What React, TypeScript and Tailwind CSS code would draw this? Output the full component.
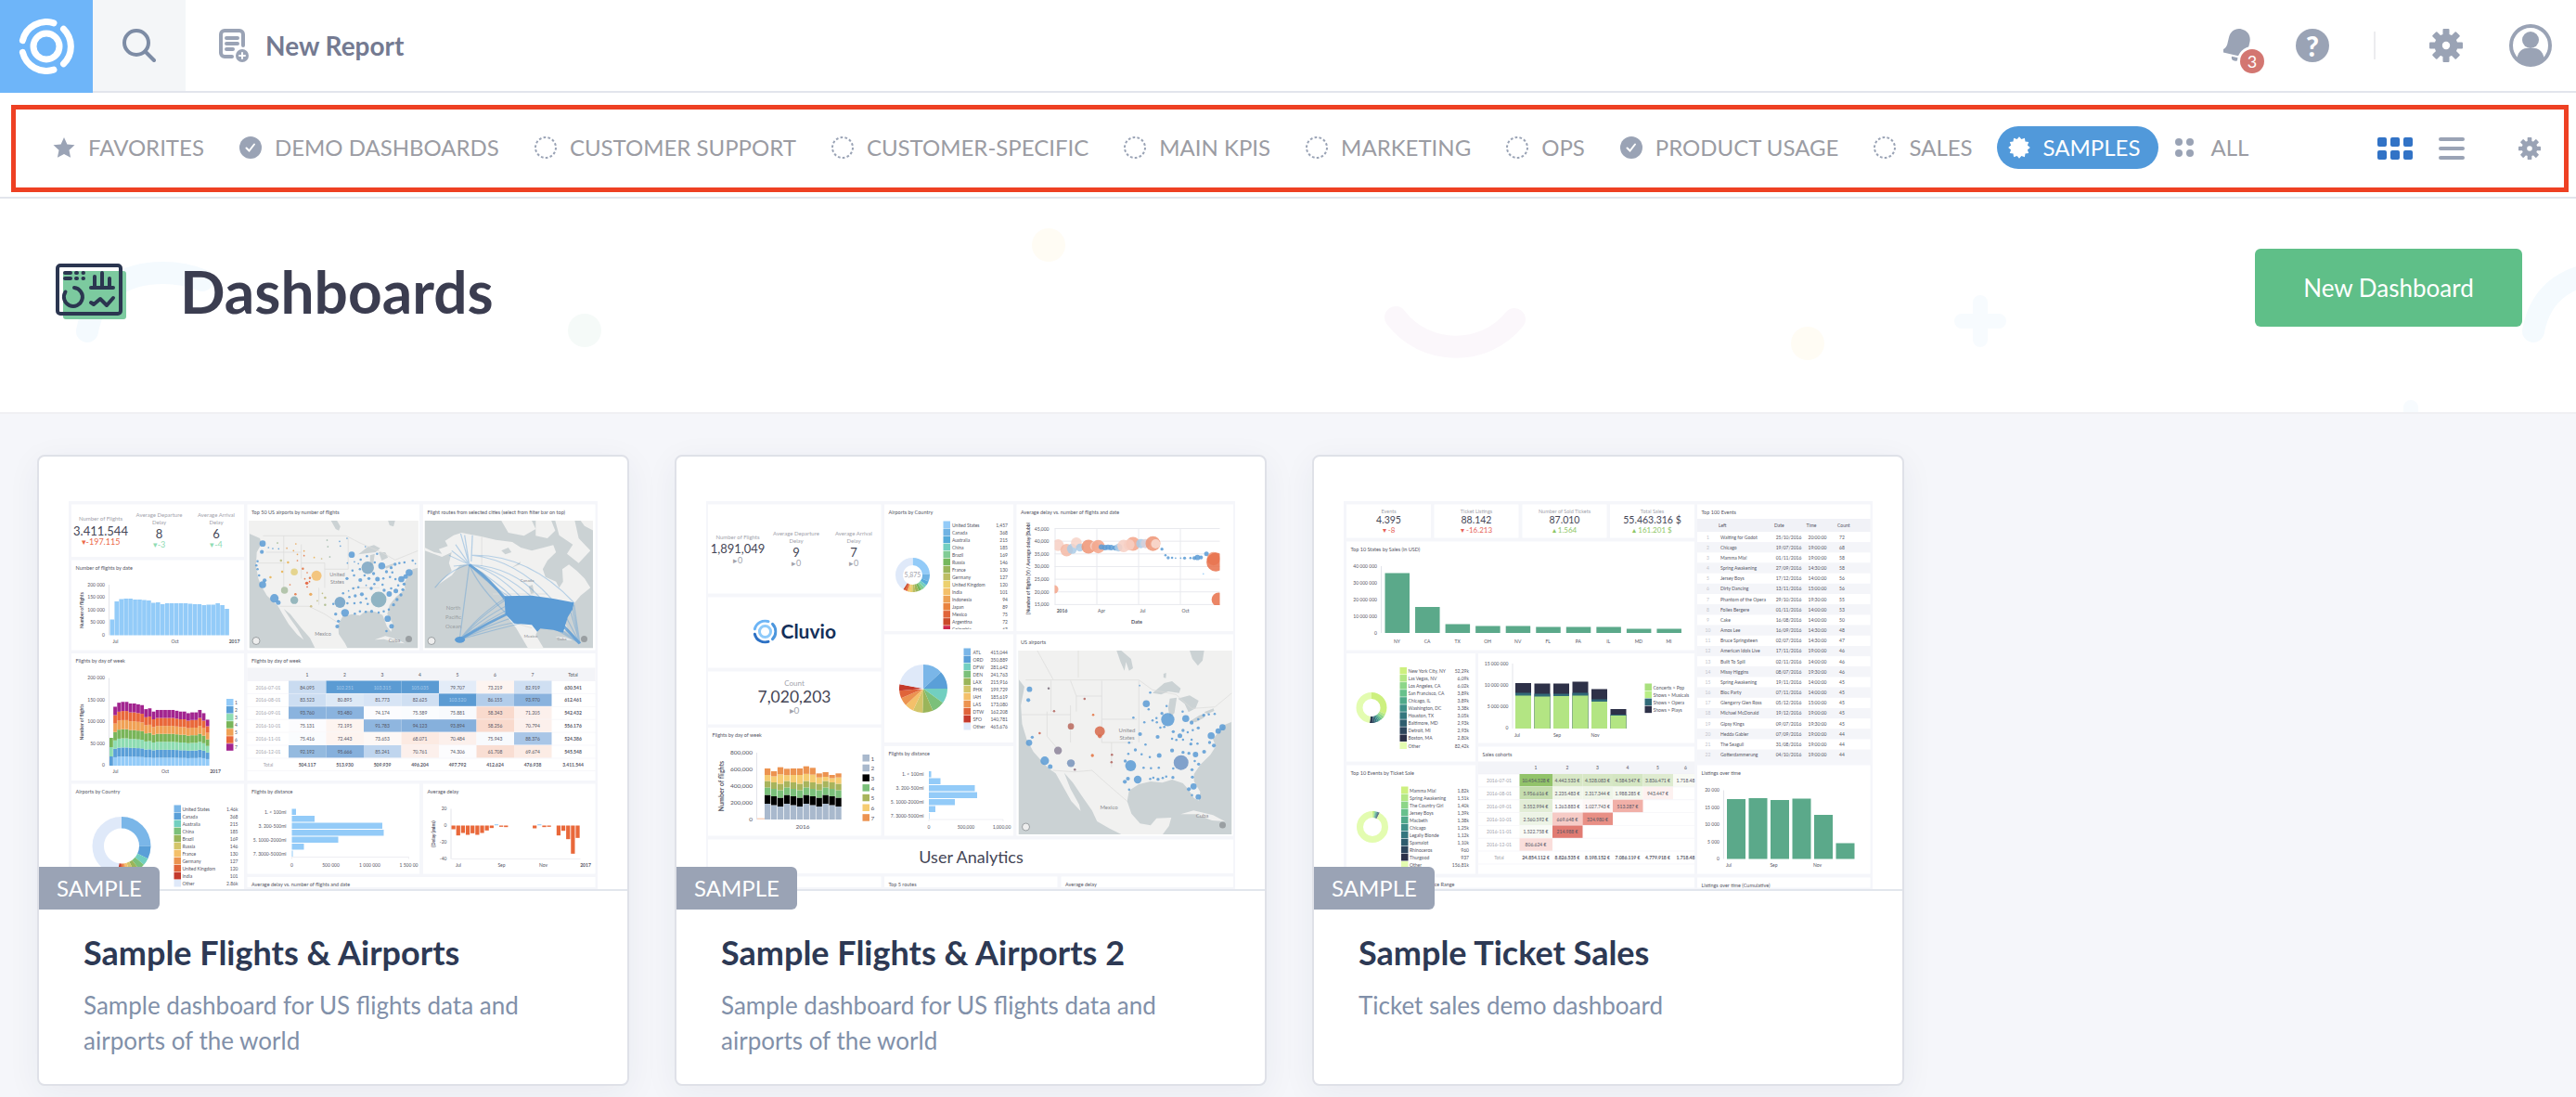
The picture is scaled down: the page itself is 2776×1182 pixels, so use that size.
import React from 'react';

type Dot = [number, number, number, string?];

const INK = '#545564';
const GREY = '#a2a3ac';

/* ---------- Icons ---------- */

const LogoMark = ({ className = '' }: { className?: string }) => (
  <svg viewBox="0 0 60 60" className={className} fill="none" stroke="#fff" strokeWidth="7" strokeLinecap="round" aria-hidden="true">
    <circle cx="30" cy="30" r="14" />
    <path d="M4.400 23.600A26.400 26.400 0 0 1 38 4.800" />
    <path d="M48.500 11.200A26.400 26.400 0 0 1 48.500 48.800" />
    <path d="M4.400 36.400A26.400 26.400 0 0 0 38 55.200" />
  </svg>
);

const SearchIcon = () => (
  <svg viewBox="0 0 36 36" className="h-9 w-9" fill="none" stroke="#7d8ca5" strokeWidth="4" strokeLinecap="round" aria-hidden="true">
    <circle cx="15" cy="15" r="13" />
    <path d="M24.500 24.500L34 34" />
  </svg>
);

const ReportIcon = () => (
  <svg viewBox="0 0 32 36" className="h-9 w-8" fill="none" stroke="#9aa3b5" strokeWidth="4" strokeLinecap="round" aria-hidden="true">
    <path d="M26 18V6a4 4 0 0 0-4-4H6a4 4 0 0 0-4 4v20a4 4 0 0 0 4 4h8" />
    <path d="M8 10h12M8 16h12M8 22h7" />
    <circle cx="25" cy="29" r="7" fill="#9aa3b5" stroke="none" />
    <path d="M25 26v6M22 29h6" stroke="#fff" strokeWidth="2" />
  </svg>
);

const BellIcon = () => (
  <svg viewBox="0 0 36 36" className="h-9 w-9" aria-hidden="true">
    <g transform="rotate(13 16 17)" fill="#9aa3b5">
      <path d="M16 0c-7 0-11.500 5-11.500 12v7c0 3-1 5-3.500 7v3h30v-3c-2.500-2-3.500-4-3.500-7v-7C27.500 5 23 0 16 0z" />
      <path d="M12 31h8a4 4 0 0 1-8 0z" />
    </g>
    <circle cx="31" cy="35" r="16" fill="#fff" />
  </svg>
);

const GearIcon = ({ className }: { className: string }) => (
  <svg viewBox="0 0 36 36" className={className} aria-hidden="true">
    <g fill="#9aa3b5">
      <circle cx="18" cy="18" r="12.500" />
      {[0, 45, 90, 135].map((a) => (
        <rect key={a} x="14.500" y="0" width="7" height="36" rx="1" transform={`rotate(${a} 18 18)`} />
      ))}
    </g>
    <circle cx="18" cy="18" r="4.200" fill="#fff" />
  </svg>
);

const AvatarIcon = () => (
  <svg viewBox="0 0 46 46" className="h-[46px] w-[46px]" aria-hidden="true">
    <circle cx="23" cy="23" r="21" fill="#fff" stroke="#9aa3b5" strokeWidth="4" />
    <circle cx="23" cy="17" r="9" fill="#9aa3b5" />
    <path d="M8.500 38c0-7 5-12 10-12h9c5 0 10 5 10 12-4 4-9 6-14.500 6s-10.500-2-14.500-6z" fill="#9aa3b5" />
  </svg>
);

const StarIcon = () => (
  <svg viewBox="0 0 24 24" className="h-6 w-6" fill="#9aa3b5" aria-hidden="true">
    <path d="M12 1l3.400 7.400 8.100.9-6 5.500 1.600 8L12 18.900l-7.100 3.900 1.600-8-6-5.500 8.100-.9z" />
  </svg>
);

const CheckIcon = () => (
  <svg viewBox="0 0 24 24" className="h-6 w-6" aria-hidden="true">
    <circle cx="12" cy="12" r="12" fill="#9aa3b5" />
    <path d="M7.500 12.500l3 3 5.500-7" fill="none" stroke="#fff" strokeWidth="2" strokeLinecap="round" />
  </svg>
);

const DashedIcon = () => (
  <svg viewBox="0 0 24 24" className="h-6 w-6" aria-hidden="true">
    <circle cx="12" cy="12" r="11" fill="none" stroke="#9aa3b5" strokeWidth="2" pathLength={140} strokeDasharray="5.500 4.500" />
  </svg>
);

const burst = Array.from({ length: 24 }, (_, i) => {
  const r = i % 2 ? 9.2 : 11.8;
  const a = (i * Math.PI) / 12 - Math.PI / 2;
  return `${12 + r * Math.cos(a)},${12 + r * Math.sin(a)}`;
}).join(' ');

const BurstIcon = () => (
  <svg viewBox="0 0 24 24" className="h-6 w-6" fill="#fff" aria-hidden="true">
    <polygon points={burst} />
  </svg>
);

const DotsIcon = () => (
  <svg viewBox="0 0 24 24" className="h-6 w-6" fill="#9aa3b5" aria-hidden="true">
    <circle cx="4" cy="6" r="4" />
    <circle cx="16" cy="6" r="4" />
    <circle cx="4" cy="18" r="4" />
    <circle cx="16" cy="18" r="4" />
  </svg>
);

const GridIcon = () => (
  <svg viewBox="0 0 38 24" className="h-6 w-[38px]" fill="#3273c6" aria-hidden="true">
    {[0, 14, 28].map((x) => (
      <g key={x}>
        <rect x={x} y="0" width="10" height="10" rx="2" />
        <rect x={x} y="14" width="10" height="10" rx="2" />
      </g>
    ))}
  </svg>
);

const ListIcon = () => (
  <svg viewBox="0 0 28 24" className="h-6 w-7" fill="#9aa3b5" aria-hidden="true">
    {[0, 10, 20].map((y) => (
      <rect key={y} x="0" y={y} width="28" height="4" rx="2" />
    ))}
  </svg>
);

const DashboardsIcon = () => (
  <svg viewBox="0 0 76 60" className="h-[60px] w-[76px]" fill="none" stroke="#2b3650" strokeWidth="4" strokeLinecap="round" strokeLinejoin="round" aria-hidden="true">
    <rect x="2" y="2" width="68" height="52" rx="3" fill="#fff" stroke="none" />
    <rect x="8" y="8" width="68" height="52" rx="3" fill="#7cca9f" stroke="none" />
    <rect x="2" y="2" width="68" height="52" rx="3" />
    <path d="M10 10h6M22 10h1M29.500 10h.5M10 16h6M22 16h1M29.500 16h.5" />
    <path d="M38 26h24M42 25V14M50 25V10M58 25V16" />
    <path d="M20 26a10 10 0 1 1-9.500 4.500" />
    <path d="M38 42l3 2 7-6 7 7 7-8" />
  </svg>
);

/* ---------- Chart pieces used in the previews ---------- */

type LabelProps = { x: number; y: number; s?: number; a?: 'start' | 'middle' | 'end'; c?: string; b?: boolean; r?: boolean; children: React.ReactNode };

const Label = ({ x, y, s = 10, a = 'start', c = INK, b, r, children }: LabelProps) => (
  <text x={x} y={y} fontSize={s} textAnchor={a} fill={c} fontWeight={b ? 700 : 400} transform={r ? `rotate(-90 ${x} ${y})` : undefined}>
    {children}
  </text>
);

const Panel = ({ x, y, w, h, title }: { x: number; y: number; w: number; h: number; title?: string }) => (
  <>
    <rect x={x} y={y} width={w} height={h} fill="#fff" />
    {title && <Label x={x + 9} y={y + 20} s={11}>{title}</Label>}
  </>
);

const Legend = ({ x, y, tx, vx, rows, colors }: { x: number; y: number; tx: number; vx?: number; rows: string[][]; colors: string[] }) => (
  <>
    {rows.map(([name, value], i) => (
      <g key={i}>
        <rect x={x} y={y + i * 16.1} width="15" height="15" fill={colors[i]} />
        <Label x={tx} y={y + i * 16.1 + 12}>{name}</Label>
        {value && vx && <Label x={vx} y={y + i * 16.1 + 12} a="end">{value}</Label>}
      </g>
    ))}
  </>
);

const Ring = ({ x, y, outer, inner, parts, colors }: { x: number; y: number; outer: number; inner: number; parts: number[]; colors: string[] }) => {
  let start = 0;
  return (
    <g transform={`rotate(-90 ${x} ${y})`}>
      {parts.map((p, i) => {
        const offset = -start;
        start += p;
        return (
          <circle key={i} cx={x} cy={y} r={(outer + inner) / 2} fill="none" stroke={colors[i]} strokeWidth={outer - inner} pathLength={100} strokeDasharray={`${p} ${100 - p}`} strokeDashoffset={offset} />
        );
      })}
    </g>
  );
};

// Axis labels, evenly stepped from the first position to the last
const Ticks = ({ x, y, step, labels, s = 10 }: { x: number; y: number; step: number; labels: string[]; s?: number }) => (
  <>
    {labels.map((l, i) => (
      <Label key={i} x={x} y={y + i * step + 3} a="end" s={s}>{l}</Label>
    ))}
    <path d={`M${x + 9} ${y}v${step * (labels.length - 1)}`} stroke="#e3e4ea" strokeWidth="2" />
  </>
);

const XLabels = ({ y, items }: { y: number; items: [number, string, boolean?][] }) => (
  <>
    {items.map(([x, l, bold]) => (
      <Label key={x} x={x} y={y} a="middle" b={bold}>{l}</Label>
    ))}
  </>
);

const Kpi = ({ x, lines, y, value, vy, delta, dy, c }: { x: number; lines: string[]; y: number; value: string; vy: number; delta: string; dy: number; c: string }) => (
  <>
    {lines.map((l, i) => (
      <Label key={l} x={x} y={y + i * 15} s={12} a="middle" c={GREY}>{l}</Label>
    ))}
    <Label x={x} y={vy} s={26} a="middle" c="#454656">{value}</Label>
    <Label x={x} y={dy} s={18} a="middle" c={c}>{delta}</Label>
  </>
);

const Dots = ({ dots, ox, oy, fill = '#5b9bd5' }: { dots: Dot[]; ox: number; oy: number; fill?: string }) => (
  <g fillOpacity="0.850">
    {dots.map(([x, y, r, c], i) => (
      <circle key={i} cx={x * 0.842 + ox} cy={(y * 2) / 3 + oy} r={r * 0.84} fill={c || fill} />
    ))}
  </g>
);

const COUNTRY = ['#7ab6e8', '#5a9fd8', '#72cfc0', '#7bc07a', '#9ab55a', '#d3c569', '#f4c06a', '#ec9350', '#e0643a', '#c43a2c', '#dfe9f9'];
const WEEK = ['#93cbf8', '#5a9fd8', '#8edcb2', '#79b559', '#f0a155', '#e9683a', '#a2248f'];
const GREENS = ['#cdf07f', '#b3e785', '#8dd688', '#68c18c', '#50a98a', '#3f8f88', '#34767e', '#2f5d6e', '#2d455c', '#2b3048', '#e3fcb0'];

/* ---------- Preview: Sample Flights & Airports ---------- */

const byDate = [34, 73, 78, 79, 79, 77, 77, 76, 75, 70, 71, 67, 69, 69, 69, 69, 69, 68, 67, 67, 65, 66, 66, 69, 65, 57];
const delays = [12, 32, 24, 30, 25, 30, 24, 16, 8, -4, 4, 5, 0, 0, 0, 0, 0, 9, -4, 5, 4, 0, 32, 17, 44, 91, 40];

const heat: [string, string[], string[]][] = [
  ['2016-07-01', ['84.095', '102.251', '103.315', '105.035', '79.707', '73.219', '82.919', '630.541'], ['#c9dbf0', '#5b9bd3', '#5b9bd3', '#5b9bd3', '#e3ecf8', '#fdf4f0', '#cfdff2']],
  ['2016-08-01', ['83.523', '80.895', '81.773', '82.625', '103.520', '86.155', '93.970', '612.461'], ['#cddef2', '#dde9f6', '#d7e4f5', '#cfdff2', '#5b9bd3', '#b3cdea', '#8ab3de']],
  ['2016-09-01', ['93.760', '93.480', '74.174', '75.589', '75.881', '58.343', '71.205', '542.432'], ['#8ab3de', '#8ab3de', '#fcfcfe', '#fafcfe', '#f8fafd', '#f9dacd', '#fcf0ec']],
  ['2016-10-01', ['75.131', '72.195', '91.783', '94.123', '93.894', '58.256', '70.794', '556.176'], ['#fcfcfe', '#fdf4f0', '#8fb6df', '#86b0dc', '#86b0dc', '#f9dacd', '#fcf0ec']],
  ['2016-11-01', ['75.416', '72.443', '73.653', '68.071', '70.484', '75.943', '88.376', '524.386'], ['#fafcfe', '#fdf4f0', '#fdf8f6', '#fceae2', '#fcf0ec', '#f8fafd', '#a9c6e7']],
  ['2016-12-01', ['92.192', '95.666', '85.241', '70.761', '74.306', '61.708', '69.674', '545.548'], ['#94badf', '#86b0dc', '#bfd5ee', '#fcf0ec', '#fcfcfe', '#f9ded3', '#fcece5']],
];
const heatTotals = ['504.117', '513.930', '509.939', '496.204', '497.792', '412.624', '476.938', '3.411.544'];

const usDots: Dot[] = [
  [601, 317, 8], [599, 344, 5], [601, 450, 9], [631, 494, 11], [641, 508, 6], [606, 436, 5], [588, 374, 3], [682, 409, 9, '#e3cf7c'], [739, 421, 13, '#f3bd6b'],
  [657, 468, 9, '#a9bda0'], [682, 500, 10, '#86adb4'], [870, 395, 16, '#7aa5c2'], [906, 389, 9], [829, 353, 8], [976, 411, 9], [956, 432, 8], [967, 424, 6],
  [898, 498, 20, '#7fa9bb'], [799, 507, 14, '#6c9fc5'], [812, 541, 10], [921, 560, 8], [931, 584, 6], [925, 480, 7], [942, 470, 6], [895, 432, 6], [851, 435, 5], [855, 481, 5],
  [616, 330, 2], [627, 333, 2], [639, 315, 2, '#8fae7c'], [642, 334, 2], [663, 332, 2, '#e3a15a'], [686, 318, 2, '#e9a04b'], [680, 340, 2, '#e9a04b'], [690, 352, 2, '#e9a04b'],
  [707, 341, 2, '#e9a04b'], [648, 372, 3, '#b9b878'], [666, 378, 3, '#e9b04b'], [690, 372, 2, '#e3703c'], [707, 356, 2, '#e3703c'], [733, 362, 2, '#e9b04b'], [752, 366, 2, '#c9b878'],
  [773, 360, 2, '#8fae9c'], [766, 306, 2, '#8fae9c'], [768, 327, 2, '#8fae9c'], [798, 310, 2], [800, 325, 2], [817, 300, 2], [651, 408, 3, '#e9b04b'], [621, 426, 3, '#e9b04b'], [704, 398, 3, '#e3703c'],
  [715, 411, 2, '#e3703c'], [722, 428, 3, '#e3703c'], [709, 431, 2, '#e3703c'], [714, 445, 4, '#e3542c'], [721, 440, 2, '#e3542c'], [715, 457, 2, '#e3542c'], [671, 450, 2, '#e3703c'], [685, 481, 3, '#e3703c'],
  [724, 481, 4, '#e9a04b'], [754, 478, 2, '#b9b878'], [761, 492, 3, '#b9b878'], [741, 502, 2, '#b9b878'], [725, 520, 3, '#c9b878'], [761, 515, 3, '#a9b888'], [585, 388, 3], [588, 400, 3], [592, 420, 3],
  [818, 380, 2], [836, 376, 2], [852, 369, 3], [868, 358, 3], [864, 327, 2], [846, 382, 2], [850, 400, 3], [831, 404, 3], [835, 420, 3], [817, 430, 4], [862, 420, 3], [873, 430, 4], [885, 414, 4], [894, 350, 3],
  [888, 378, 3], [918, 408, 4], [930, 395, 4], [940, 384, 4], [951, 380, 3], [964, 378, 3], [933, 410, 3], [927, 425, 3], [941, 432, 3], [910, 430, 3], [908, 450, 3], [887, 448, 3], [866, 452, 2], [879, 462, 4], [846, 458, 3],
  [833, 462, 3], [821, 470, 2], [807, 478, 3], [838, 486, 4], [823, 490, 3], [818, 510, 3], [836, 510, 3], [852, 508, 3], [870, 512, 3], [866, 495, 3], [850, 536, 3], [865, 538, 3], [880, 536, 4], [837, 544, 3], [898, 540, 3],
  [911, 536, 3], [924, 530, 3], [936, 515, 4], [945, 498, 4], [955, 483, 4], [960, 466, 4], [948, 452, 3], [963, 448, 4], [930, 462, 3], [912, 468, 4], [788, 545, 4], [795, 568, 4], [792, 585, 5], [782, 512, 3], [918, 600, 3], [985, 372, 3], [992, 382, 2],
];

const FlightsPreview = () => (
  <svg viewBox="0 0 1140 836" className="block w-full" role="img" aria-label="Sample Flights & Airports">
    <defs>
      <clipPath id="fa-m1"><rect x="389" y="42" width="364" height="275" /></clipPath>
      <clipPath id="fa-m2"><rect x="767" y="42" width="363" height="275" /></clipPath>
    </defs>
    <rect width="1140" height="836" fill="#f5f6fa" />
    <Panel x={6} y={7} w={372} h={113} />
    <Kpi x={69} lines={['Number of Flights']} y={42} value="3.411.544" vy={73} delta="▾-197.115" dy={94} c="#ec6a4a" />
    <Kpi x={195} lines={['Average Departure', 'Delay']} y={34} value="8" vy={79} delta="▾-3" dy={100} c="#8fdcb4" />
    <Kpi x={318} lines={['Average Arrival', 'Delay']} y={34} value="6" vy={79} delta="▾-4" dy={100} c="#8fdcb4" />

    <Panel x={6} y={127} w={372} h={194} title="Number of flights by date" />
    <Ticks x={78} y={180} step={27.2} labels={['200 000', '150 000', '100 000', '50 000', '0']} />
    {byDate.map((h, i) => (
      <rect key={i} x={89 + i * 9.9} y={289 - h} width="9.200" height={h} fill="#93cbf8" />
    ))}
    <Label x={32} y={235} a="middle" b r>Number of flights</Label>
    <XLabels y={305} items={[[101, 'Jul'], [229, 'Oct'], [357, '2017', true]]} />

    <Panel x={6} y={328} w={372} h={274} title="Flights by day of week" />
    <Ticks x={78} y={381} step={47.2} labels={['200 000', '150 000', '100 000', '50 000', '0']} />
    {byDate.map((h, i) => {
      const unit = (h * 1.74) / 7;
      const keep = i === 0 ? [1, 2, 3] : [0, 1, 2, 3, 4, 5, 6];
      const seg = i === 0 ? 20 : unit;
      return keep.map((k, n) => <rect key={`${i}-${k}`} x={88 + i * 8.3} y={570 - (n + 1) * seg} width="7.600" height={seg} fill={WEEK[k]} />);
    })}
    <Label x={32} y={476} a="middle" b r>Number of flights</Label>
    <XLabels y={586} items={[[101, 'Jul'], [208, 'Oct'], [316, '2017', true]]} />
    <Legend x={340} y={426} tx={358} rows={['1', '2', '3', '4', '5', '6', '7'].map((n) => [n])} colors={WEEK} />

    <Panel x={6} y={609} w={372} h={227} title="Airports by Country" />
    <Ring x={114} y={743} outer={63} inner={38} parts={[25, 7, 4, 3.5, 3, 2.5, 2, 2, 1.5, 1.5, 48]} colors={COUNTRY} />
    <Legend
      x={227} y={655} tx={245} vx={365} colors={COUNTRY}
      rows={[['United States', '1.46k'], ['Canada', '368'], ['Australia', '215'], ['China', '185'], ['Brazil', '169'], ['Russia', '146'], ['France', '130'], ['Germany', '127'], ['United Kingdom', '120'], ['India', '101'], ['Other', '2.86k']]}
    />

    <Panel x={385} y={7} w={371} h={314} title="Top 50 US airports by number of flights" />
    <g clipPath="url(#fa-m1)">
      <rect x="389" y="42" width="364" height="275" fill="#cbd2d4" />
      <g transform="translate(-88 -120) scale(.842 .6667)">
        <path fill="#f1f1f0" d="M567 243H999V395L985 400L975 420L963 445L966 465L942 490L926 515L920 545L934 575L930 602L919 585L908 548L890 538L865 535L850 550L830 545L806 552L794 580L796 610L812 640L818 655H735L722 622L700 590L672 545L655 528L672 560L690 592L706 628L690 612L668 578L652 545L640 518L612 485L598 455L590 430L584 390L586 345L598 318L594 300L567 285Z" />
        <path fill="#cbd2d4" d="M846 352L870 328L886 322L902 332L890 345L870 348ZM876 355L888 350L884 385L876 390ZM898 345L915 345L922 362L906 372ZM912 392L938 380L935 388L918 398ZM776 243L790 240L800 262L796 275L788 270ZM922 243H940L936 262L926 258Z" />
        <path fill="#f1f1f0" d="M888 628L915 616L945 626L965 640L940 636L912 626Z" />
        <path fill="none" stroke="#dcdddb" strokeWidth="2" d="M602 292H815L850 315L905 345L940 370L999 340M645 520L720 520L760 545L790 570M655 292V460M610 345H700M700 320V430M590 380H660M700 380H760V460M760 400H820M745 460V515M820 300V400M830 460H900" />
      </g>
      <Dots dots={usDots} ox={-88} oy={-120} />
      <Label x={579} y={162} a="middle" s={11} c="#8c8c90">United</Label>
      <Label x={579} y={177} a="middle" s={11} c="#8c8c90">States</Label>
      <Label x={548} y={290} a="middle" s={11} c="#8c8c90">Mexico</Label>
      <Label x={702} y={304} a="middle" s={11} c="#8c8c90">Cuba</Label>
      <circle cx="404" cy="301" r="8" fill="#eee" stroke="#9a9fa2" strokeWidth="2" />
      <circle cx="733" cy="297" r="7" fill="#9a9fa2" />
    </g>

    <Panel x={764} y={7} w={371} h={314} title="Flight routes from selected cities (select from filter bar on top)" />
    <g clipPath="url(#fa-m2)">
      <rect x="767" y="42" width="363" height="275" fill="#cbd2d4" />
      <g transform="translate(-88 -120) scale(.842 .6667)">
        <path fill="#f1f1f0" d="M1016 330L1040 345L1060 350L1052 335L1075 325L1068 308L1090 290L1110 282L1160 294L1198 305L1240 312L1262 330L1290 340L1320 330L1345 322L1352 345L1330 372L1318 400L1325 425L1352 440L1360 460L1370 440L1368 400L1385 385L1405 405L1425 430L1440 460L1415 485L1400 508L1380 530L1372 560L1382 595L1372 600L1355 580L1310 585L1300 612L1320 655H1280L1250 590L1222 545L1220 490L1195 450L1165 410L1130 385L1105 388L1085 420L1050 450L1085 405L1078 380L1085 345L1060 360L1016 340Z" />
        <path fill="#f1f1f0" d="M1212 243H1290L1300 270L1270 292L1230 282ZM1300 243H1340L1350 275L1330 300L1300 292ZM1350 243H1400L1410 300L1440 340L1410 380L1380 350L1395 320L1360 290ZM1415 243H1447V275L1425 260ZM1350 618L1375 620L1395 630L1370 628Z" />
        <path fill="#cbd2d4" d="M1212 340L1230 330L1238 345L1222 352ZM1238 395L1262 375L1258 385ZM1282 455L1292 450L1296 478L1288 480Z" />
        <path fill="none" stroke="#dcdddb" strokeWidth="2" d="M1162 295V390M1190 480H1330M1250 575L1290 590" />
        <g fill="none" stroke="#5b9bd5" strokeWidth="3" strokeOpacity=".4">
          <path d="M1130 385L1108 285M1130 385L1118 290M1135 375L1138 290M1130 385L1085 340M1130 385L1078 355M1130 385L1095 320M1130 385L1090 390M1130 385Q1080 400 1042 460M1130 385L1105 628M1130 385Q1160 420 1220 490M1130 385Q1180 420 1225 510M1130 385Q1200 440 1240 490M1130 385Q1210 400 1290 490M1130 385Q1240 390 1310 490M1135 355Q1250 370 1340 495M1135 355Q1280 350 1398 508M1130 385Q1190 400 1260 488M1130 385Q1150 450 1222 540M1130 385Q1160 430 1230 487" />
          <path d="M1105 628Q1150 560 1222 500M1105 628Q1150 570 1222 520M1105 628Q1160 575 1222 535M1105 628Q1160 585 1224 548M1105 628Q1160 590 1232 560M1105 628Q1170 590 1245 572M1105 628Q1180 600 1260 575M1105 628Q1150 550 1226 490" />
          <path d="M1413 640L1398 515M1413 640L1390 540M1413 640L1380 560M1413 640L1372 580M1413 640L1360 590M1413 640L1345 590M1413 640L1394 525M1413 640L1366 600" />
        </g>
        <path fill="#5b9bd5" d="M1220 487L1290 485L1345 495L1398 508L1394 530L1382 555L1370 605L1345 596L1312 592L1304 602L1290 580L1245 575L1222 545Z" />
        <path fill="none" stroke="#5b9bd5" strokeWidth="8" strokeOpacity=".8" d="M1105 628Q1160 585 1226 545M1130 385Q1180 430 1222 495M1413 640L1372 585" />
        <ellipse cx="1106" cy="628" rx="13" ry="10" fill="#5b9bd5" />
      </g>
      <Label x={829} y={233} a="middle" s={12} c="#9aa0a3">North</Label>
      <Label x={829} y={254} a="middle" s={12} c="#9aa0a3">Pacific</Label>
      <Label x={829} y={274} a="middle" s={12} c="#9aa0a3">Ocean</Label>
      <Label x={988} y={173} a="middle" s={9} c="#8c8c90">Canada</Label>
      <Label x={996} y={293} a="middle" s={9} c="#8c8c90">Mexico</Label>
      <Label x={1063} y={299} a="middle" s={9} c="#8c8c90">Cuba</Label>
      <circle cx="782" cy="301" r="8" fill="#eee" stroke="#9a9fa2" strokeWidth="2" />
      <circle cx="1111" cy="297" r="7" fill="#9a9fa2" />
    </g>

    <Panel x={385} y={328} w={750} h={274} title="Flights by day of week" />
    <rect x="385" y="359" width="750" height="28" fill="#f3f4f8" />
    {['1', '2', '3', '4', '5', '6', '7', 'Total'].map((h, i) => (
      <Label key={h} x={514 + i * 81 + (i === 7 ? 6 : 0)} y={377} a="middle">{h}</Label>
    ))}
    {heat.map(([date, values, fills], r) => (
      <g key={date}>
        <path d={`M385 ${387 + r * 27.8}h750`} stroke="#eeeff4" strokeWidth="1" />
        <Label x={430} y={405 + r * 27.8} a="middle" c={GREY}>{date}</Label>
        {fills.map((f, i) => (
          <rect key={i} x={474 + i * 81} y={387 + r * 27.8} width="81" height="27" fill={f} />
        ))}
        {values.map((v, i) => (
          <Label key={i} x={514 + i * 81 + (i === 7 ? 6 : 0)} y={405 + r * 27.8} a="middle" b={i === 7} c={fills[i] === '#5b9bd3' ? '#a9cbec' : INK}>{v}</Label>
        ))}
      </g>
    ))}
    <path d="M385 554h750M385 581h750" stroke="#eeeff4" />
    <Label x={430} y={571} a="middle" c={GREY}>Total</Label>
    {heatTotals.map((v, i) => (
      <Label key={v} x={514 + i * 81 + (i === 7 ? 6 : 0)} y={571} a="middle" b>{v}</Label>
    ))}

    <Panel x={385} y={609} w={371} h={194} title="Flights by distance" />
    {[9, 49, 195, 198, 100, 26, 2].map((w, i) => (
      <rect key={i} x="481" y={663 + i * 15} width={w} height="13" fill="#93cbf8" />
    ))}
    {['1. < 100mi', '3. 200-500mi', '5. 1000-2000mi', '7. 3000-5000mi'].map((l, i) => (
      <Label key={l} x={469} y={673 + i * 30} a="end">{l}</Label>
    ))}
    <path d="M481 771v-4h252v4" fill="none" stroke="#dcdde4" />
    <XLabels y={787} items={[[481, '0'], [565, '500 000'], [649, '1 000 000'], [733, '1 500 00']]} />

    <Panel x={764} y={609} w={371} h={194} title="Average delay" />
    <Ticks x={815} y={663} step={36} labels={['20', '0', '-20', '-40']} />
    {delays.map((d, i) =>
      d === 0 ? null : (
        <rect key={i} x={825 + i * 10.3} y={d < 0 ? 696 : 699} width="8.500" height={Math.abs(d) * 0.667} fill={d < 0 ? '#a5d5f9' : '#e9683a'} />
      )
    )}
    <path d="M825 771h278" stroke="#dcdde4" />
    <Label x={789} y={717} a="middle" b r>(Delay (mins)</Label>
    <XLabels y={787} items={[[840, 'Jul'], [933, 'Sep'], [1023, 'Nov'], [1114, '2017', true]]} />

    <Panel x={385} y={810} w={750} h={22} title="Average delay vs. number of flights and date" />
  </svg>
);

/* ---------- Preview: Sample Flights & Airports 2 ---------- */

const COUNTRY2 = ['#93cbf8', '#70b3e4', '#55abd9', '#72cfc0', '#80cc95', '#75b85d', '#9ab55a', '#bcbd62', '#ecd06e', '#f4c06a', '#eda155', '#e9833f', '#e0643a', '#cb4a2a', '#cf2a4f'];
const STACK2 = ['#a9b9cd', '#000', '#7bc07a', '#a8b45c', '#f6cc72', '#ec9350'];
const tops2 = [204, 213, 200, 205, 204, 204, 197, 202, 220, 216, 225, 220];

const us2Dots: Dot[] = [
  [925, 788, 7], [922, 823, 5], [974, 785, 3, '#7a6d7c'], [988, 859, 3, '#b0625c'], [1066, 819, 3, '#b0625c'], [1088, 871, 3, '#e3703c'], [1279, 886, 17], [1325, 883, 9], [1224, 835, 9],
  [1031, 908, 8, '#b9675c'], [1105, 924, 13, '#d8694a'], [1105, 940, 5, '#d8694a'], [951, 930, 3, '#c9604c'], [924, 961, 8], [932, 943, 4], [998, 986, 10, '#8c8399'], [964, 1019, 11], [978, 1038, 6], [1031, 1027, 10, '#7793bb'],
  [1041, 1048, 3, '#8c6d7c'], [1086, 1002, 4, '#e3703c'], [1136, 1000, 3, '#b0625c'], [1135, 1024, 3, '#b0625c'], [1184, 1035, 14], [1202, 1080, 10], [1313, 1025, 19, '#6d93c4'], [1390, 938, 9], [1419, 911, 8], [1408, 923, 7],
  [1345, 1102, 8], [1357, 1136, 7], [1333, 1111, 5], [1350, 999, 7], [1310, 938, 6], [1253, 942, 5], [1257, 1002, 6], [1290, 986, 5], [1208, 933, 5], [1230, 853, 3], [1191, 880, 3], [1219, 895, 3], [1240, 889, 3], [1250, 881, 3],
  [1234, 799, 3], [1276, 842, 3], [1317, 860, 3], [1357, 885, 3], [1371, 872, 4], [1384, 869, 3], [1399, 868, 3], [1207, 776, 2], [1251, 895, 3], [1264, 866, 4], [1340, 896, 5], [1357, 913, 4], [1293, 925, 4], [1270, 910, 3],
  [1260, 912, 3], [1318, 921, 4], [1330, 927, 3], [1343, 920, 3], [1340, 951, 3], [1318, 951, 3], [1301, 952, 3], [1290, 948, 3], [1222, 967, 3], [1180, 961, 3], [1196, 984, 4], [1178, 997, 3], [1212, 998, 3], [1233, 1007, 3],
  [1170, 1020, 4], [1217, 1042, 3], [1236, 1043, 3], [1256, 1042, 3], [1293, 1044, 3], [1372, 990, 5], [1397, 970, 5], [1386, 960, 4], [1333, 995, 4], [1348, 1020, 3], [1358, 1030, 4], [1341, 1048, 4], [1342, 1072, 4], [1292, 1073, 4],
  [1275, 1070, 3], [1266, 1075, 3], [1254, 1079, 4], [1242, 1074, 3], [1234, 1078, 3], [1177, 1077, 5], [1169, 1087, 5], [1180, 1112, 3], [1341, 1130, 3], [1338, 965, 4], [1355, 964, 3], [1318, 992, 4],
];

const bubbles: Dot[] = [
  [998, 322, 15, '#f7cfc3'], [1020, 338, 16, '#f3b9a5'], [1034, 334, 13, '#aacbe6'], [1045, 315, 14, '#f7d3c8'], [1054, 330, 10, '#aacbe6'], [1076, 327, 18, '#ef9474'], [1092, 325, 12, '#f7cfc3'], [1101, 327, 17, '#f3a58a'],
  [1109, 328, 7], [1118, 330, 7], [1126, 329, 7], [1134, 330, 7], [1145, 331, 7], [1153, 330, 10, '#aacbe6'], [1166, 325, 16, '#f7cfc3'], [1190, 318, 18, '#f3a58a'], [1180, 321, 14, '#f7cfc3'], [1210, 317, 12, '#aacbe6'],
  [1222, 317, 12, '#d8cfd8'], [1241, 317, 19, '#ef9474'], [1248, 318, 12, '#f9ddd3'], [1264, 335, 4], [1273, 355, 3], [1280, 363, 4], [1290, 363, 3], [1299, 364, 2], [1312, 364, 2], [1322, 364, 4], [1337, 364, 3], [1347, 364, 5],
  [1355, 362, 7], [1364, 362, 5], [1378, 350, 6], [1396, 366, 17, '#ef9474'], [1402, 377, 24, '#e8704a'], [1370, 415, 2, '#93cbf8'], [988, 465, 11, '#f3a58a'], [1409, 498, 18, '#e8704a'],
];

const Flights2Preview = () => (
  <svg viewBox="0 0 1140 836" className="block w-full" role="img" aria-label="Sample Flights & Airports 2">
    <defs>
      <clipPath id="f2-map"><rect x="673" y="322" width="460" height="396" /></clipPath>
      <clipPath id="f2-plot"><rect x="751" y="50" width="356" height="174" /></clipPath>
      <clipPath id="f2-leg"><rect x="384" y="7" width="278" height="269" /></clipPath>
    </defs>
    <rect width="1140" height="836" fill="#f5f6fa" />
    <Panel x={4} y={7} w={373} h={192} />
    <Kpi x={68} lines={['Number of Flights']} y={82} value="1,891,049" vy={112} delta="▸0" dy={133} c={GREY} />
    <Kpi x={194} lines={['Average Departure', 'Delay']} y={74} value="9" vy={119} delta="▸0" dy={140} c={GREY} />
    <Kpi x={318} lines={['Average Arrival', 'Delay']} y={74} value="7" vy={119} delta="▸0" dy={140} c={GREY} />

    <Panel x={4} y={207} w={373} h={152} />
    <svg x="101" y="255" width="52" height="52" viewBox="0 0 60 60" fill="none" strokeWidth="7" strokeLinecap="round">
      <circle cx="30" cy="30" r="14" stroke="#8fcbfa" />
      <path d="M4.400 23.600A26.400 26.400 0 0 1 38 4.800" stroke="#6cb4f5" />
      <path d="M48.500 11.200A26.400 26.400 0 0 1 48.500 48.800" stroke="#4b96dd" />
      <path d="M4.400 36.400A26.400 26.400 0 0 0 38 55.200" stroke="#2d71c4" />
    </svg>
    <Label x={161} y={295} s={42} b c="#14305a">Cluvio</Label>

    <Panel x={4} y={367} w={373} h={114} />
    <Label x={190} y={398} s={16} a="middle" c={GREY}>Count</Label>
    <Label x={190} y={434} s={35} a="middle" c="#454656">7,020,203</Label>
    <Label x={190} y={458} s={20} a="middle" c={GREY}>▸0</Label>

    <Panel x={4} y={488} w={373} h={233} title="Flights by day of week" />
    <Ticks x={100} y={542} step={36} s={13} labels={['800,000', '600,000', '400,000', '200,000', '0']} />
    <rect x="110" y="683" width="16" height="3" fill="#f8d4c0" />
    {tops2.map((t, i) => {
      const top = 440 + (t * 2) / 3;
      const wobble = (i % 3) * 3;
      const edges = [686, 652 + wobble, 633 + wobble, 617 + wobble, 603 + wobble, 590 + (top - 576) / 2, top];
      return STACK2.map((c, k) => <rect key={`${i}-${k}`} x={126 + i * 13.9} y={edges[k + 1]} width="12.500" height={Math.max(0, edges[k] - edges[k + 1])} fill={c} />);
    })}
    <Label x={38} y={614} s={14} a="middle" b r>Number of flights</Label>
    <Label x={208} y={706} s={13} a="middle">2016</Label>
    {['#a9b9cd', ...STACK2].map((c, i) => (
      <g key={i}>
        <rect x="337" y={546 + i * 21.4} width="15" height="15" fill={c} />
        <Label x={355} y={559 + i * 21.4} s={13}>{i + 1}</Label>
      </g>
    ))}

    <Panel x={384} y={7} w={278} h={273} title="Airports by Country" />
    <Ring x={445} y={159} outer={37} inner={21} parts={[24, 7, 4, 3, 3, 3, 3, 3, 2.5, 2.5, 0, 0, 2, 2, 41]} colors={[...COUNTRY2.slice(0, 14), '#dfe9f9']} />
    <Label x={445} y={164} s={14} a="middle" c={GREY}>5,875</Label>
    <g clipPath="url(#f2-leg)">
      <Legend
        x={511} y={43} tx={530} vx={650} colors={COUNTRY2}
        rows={[['United States', '1,457'], ['Canada', '368'], ['Australia', '215'], ['China', '185'], ['Brazil', '169'], ['Russia', '146'], ['France', '130'], ['Germany', '127'], ['United Kingdom', '120'], ['India', '101'], ['Indonesia', '94'], ['Japan', '89'], ['Mexico', '75'], ['Argentina', '72'], ['Colombia', '63']]}
      />
    </g>

    <Panel x={384} y={287} w={278} h={233} />
    <Ring x={468} y={404} outer={52} inner={0} parts={[13, 12, 10, 8.5, 7, 6.5, 6, 5.5, 5, 4.5, 22]} colors={COUNTRY} />
    <Legend
      x={555} y={317} tx={575} vx={650} colors={COUNTRY}
      rows={[['ATL', '415,044'], ['ORD', '350,889'], ['DFW', '281,642'], ['DEN', '241,763'], ['LAX', '215,916'], ['PHX', '199,729'], ['IAH', '185,619'], ['LAS', '173,080'], ['DTW', '162,208'], ['SFO', '140,781'], ['Other', '465,676']]}
    />

    <Panel x={384} y={528} w={278} h={193} title="Flights by distance" />
    {[5, 25, 99, 104, 56, 14, 1].map((w, i) => (
      <rect key={i} x="480" y={582 + i * 15} width={w} height="13" fill="#93cbf8" />
    ))}
    {['1. < 100mi', '3. 200-500mi', '5. 1000-2000mi', '7. 3000-5000mi'].map((l, i) => (
      <Label key={l} x={469} y={592 + i * 30} a="end">{l}</Label>
    ))}
    <path d="M480 690v-4h160v4" fill="none" stroke="#dcdde4" />
    <XLabels y={706} items={[[480, '0'], [560, '500,000'], [637, '1,000,00']]} />

    <Panel x={669} y={7} w={467} h={273} title="Average delay vs. number of flights and date" />
    {['45,000', '40,000', '35,000', '30,000', '25,000', '20,000', '15,000'].map((l, i) => (
      <g key={l}>
        <Label x={739} y={63 + i * 27.3} a="end">{l}</Label>
        <path d={`M751 ${59 + i * 27.3}h356`} stroke="#e8e9ee" strokeWidth="2" />
      </g>
    ))}
    <path d="M752 59v164M842 59v164M932 59v164M1022 59v164" stroke="#e8e9ee" strokeWidth="2" />
    <g clipPath="url(#f2-plot)">
      <Dots dots={bubbles} ox={-82} oy={-120} />
    </g>
    <Label x={698} y={145} a="middle" b r>(Number of flights (Y) / Average delay (Bubbl</Label>
    <XLabels y={239} items={[[767, '2016', true], [852, 'Apr'], [941, 'Jul'], [1033, 'Oct']]} />
    <Label x={928} y={264} s={11} a="middle" b>Date</Label>

    <Panel x={669} y={287} w={467} h={434} title="US airports" />
    <g clipPath="url(#f2-map)">
      <rect x="673" y="322" width="460" height="396" fill="#cbd2d4" />
      <g transform="translate(-82 -120) scale(.842 .6667)">
        <path fill="#f1f1f0" d="M897 663H1443V893L1420 905L1407 930L1394 948L1402 972L1388 1000L1362 1032L1346 1062L1346 1085L1362 1120L1358 1148L1346 1140L1332 1112L1318 1092L1290 1080L1265 1090L1235 1086L1205 1095L1180 1115L1175 1150L1186 1190L1208 1222L1235 1228L1250 1205L1288 1203L1282 1230L1266 1257H1160L1130 1238L1098 1215L1085 1180L1060 1135L1036 1090L1014 1058L1030 1110L1052 1160L1056 1182L1032 1150L1010 1100L992 1060L975 1045L960 1025L935 990L918 950L906 900L903 840L912 780L897 755Z" />
        <path fill="#cbd2d4" d="M1240 800L1270 768L1290 762L1312 785L1308 800L1280 795L1262 805ZM1284 818L1302 815L1296 865L1284 880L1280 850ZM1305 818L1335 808L1358 825L1350 850L1332 862L1322 835ZM1335 892L1360 872L1375 866L1372 880L1350 895ZM1372 862L1396 850L1398 858L1380 868ZM1148 663H1160L1185 690L1190 720L1180 728L1172 700L1168 728L1158 700ZM1335 663H1372L1368 695L1356 712L1342 690ZM1268 738L1275 735L1274 752L1268 750Z" />
        <path fill="#f1f1f0" d="M1312 1192L1345 1180L1395 1195L1425 1215L1392 1212L1350 1192Z" />
        <path fill="none" stroke="#dcdddb" strokeWidth="2" d="M915 758H1205L1240 790L1300 805L1340 850L1400 845L1443 800M985 1050L1040 1055L1085 1050L1120 1090L1175 1150M980 760V860M1030 760L1045 810H1110M1110 760V960M905 870H1030M1030 840V960M1110 885H1200M1045 810V860M970 860V940L1000 985M1110 960H1190M1135 960V1040M1205 760V960M1050 663V750M945 663L985 755" />
      </g>
      <Dots dots={us2Dots} ox={-82} oy={-120} />
      <Label x={907} y={497} a="middle" s={12} c="#8c8c90">United</Label>
      <Label x={907} y={513} a="middle" s={12} c="#8c8c90">States</Label>
      <Label x={868} y={663} a="middle" s={12} c="#8c8c90">Mexico</Label>
      <Label x={1069} y={681} a="middle" s={12} c="#8c8c90">Cuba</Label>
      <circle cx="689" cy="702" r="8" fill="#eee" stroke="#9a9fa2" strokeWidth="2" />
      <circle cx="1113" cy="698" r="7" fill="#9a9fa2" />
    </g>

    <Panel x={4} y={729} w={1132} h={73} />
    <Label x={571} y={779} s={36} a="middle" c="#454656">User Analytics</Label>
    <Panel x={4} y={809} w={373} h={23} />
    <Panel x={384} y={809} w={373} h={23} title="Top 5 routes" />
    <Panel x={765} y={809} w={371} h={23} title="Average delay" />
  </svg>
);

/* ---------- Preview: Sample Ticket Sales ---------- */

const events = [
  ['Waiting for Godot', '25/10/2016', '20:00:00', '72'],
  ['Chicago', '19/07/2016', '19:00:00', '68'],
  ['Mamma Mia!', '01/11/2016', '19:00:00', '58'],
  ['Spring Awakening', '27/09/2016', '14:30:00', '58'],
  ['Jersey Boys', '17/12/2016', '14:00:00', '56'],
  ['Dirty Dancing', '13/11/2016', '15:00:00', '56'],
  ['Phantom of the Opera', '29/10/2016', '19:30:00', '55'],
  ['Folies Bergere', '01/11/2016', '14:00:00', '53'],
  ['Cake', '16/08/2016', '14:00:00', '50'],
  ['Amos Lee', '16/09/2016', '14:30:00', '48'],
  ['Bruce Springsteen', '02/07/2016', '14:30:00', '47'],
  ['American Idols Live', '17/11/2016', '19:00:00', '46'],
  ['Built To Spill', '02/11/2016', '14:00:00', '46'],
  ['Missy Higgins', '08/07/2016', '19:30:00', '46'],
  ['Spring Awakening', '19/11/2016', '14:00:00', '45'],
  ['Bloc Party', '07/11/2016', '14:00:00', '45'],
  ['Glengarry Glen Ross', '05/12/2016', '15:00:00', '45'],
  ['Michael McDonald', '19/12/2016', '19:00:00', '45'],
  ['Gipsy Kings', '09/07/2016', '19:30:00', '45'],
  ['Hedda Gabler', '07/09/2016', '19:00:00', '44'],
  ['The Seagull', '31/08/2016', '19:00:00', '44'],
  ['Gotterdammerung', '04/10/2016', '19:00:00', '44'],
];

const cohorts: [string, string[], string[]][] = [
  ['2016-07-01', ['10.454.528 €', '4.442.533 €', '4.528.083 €', '4.584.547 €', '3.836.471 €', '1.718.48'], ['#92c36a', '#d7e7c5', '#d7e7c5', '#d4e6c2', '#deebd0', '#f8faf4']],
  ['2016-08-01', ['5.956.616 €', '2.235.483 €', '2.317.344 €', '1.988.285 €', '943.447 €'], ['#c5ddae', '#f1f6ea', '#eff5e8', '#f4f8ef', '#fdf1f0']],
  ['2016-09-01', ['3.552.994 €', '1.263.883 €', '1.027.743 €', '513.287 €'], ['#e2edd6', '#fdfcfb', '#fdf7f6', '#f1b0a8']],
  ['2016-10-01', ['2.560.592 €', '669.648 €', '324.980 €'], ['#edf4e6', '#f6cbc6', '#e88f85']],
  ['2016-11-01', ['1.522.758 €', '214.988 €'], ['#f9fbf6', '#e17b72']],
  ['2016-12-01', ['806.624 €'], ['#fadedb']],
];
const cohortX = [379, 450, 515, 580, 645, 710, 756];
const cohortMid = [414, 482, 547, 612, 677, 737];

const sales: [number, number, number][] = [[392, 413, 419], [393, 415, 421], [393, 415, 420], [389, 413, 419], [405, 427, 432], [448, 460, 462]];

const SalesPreview = () => (
  <svg viewBox="0 0 1140 836" className="block w-full" role="img" aria-label="Sample Ticket Sales">
    <rect width="1140" height="836" fill="#f5f6fa" />
    {[
      [97, 'Events', '4.395', '▾ -8', '#e65f57'],
      [286, 'Ticket Listings', '88.142', '▾ -16.213', '#e65f57'],
      [476, 'Number of Sold Tickets', '87.010', '▴ 1.564', '#8cc665'],
      [665, 'Total Sales', '55.463.316 $', '▴ 161.201 $', '#8cc665'],
    ].map(([x, label, value, delta, c]) => (
      <g key={x}>
        <Panel x={Number(x) - 91} y={7} w={182} h={72} />
        <Label x={Number(x)} y={26} s={11} a="middle" c={GREY}>{label}</Label>
        <Label x={Number(x)} y={47} s={21} a="middle" c="#454656">{value}</Label>
        <Label x={Number(x)} y={67} s={16} a="middle" c={String(c)}>{delta}</Label>
      </g>
    ))}

    <Panel x={6} y={87} w={750} h={234} title="Top 10 States by Sales (in USD)" />
    <Ticks x={72} y={140} step={36} labels={['40 000 000', '30 000 000', '20 000 000', '10 000 000', '0']} />
    {[129, 56, 19, 15, 15, 13, 13, 13, 9, 9].map((h, i) => (
      <rect key={i} x={89 + i * 65.1} y={284 - h} width="53" height={h} fill="#5ba98a" />
    ))}
    {['NY', 'CA', 'TX', 'OH', 'NV', 'FL', 'PA', 'IL', 'MD', 'MI'].map((l, i) => (
      <Label key={l} x={115 + i * 65.1} y={305} a="middle">{l}</Label>
    ))}

    <Panel x={6} y={328} w={278} h={233} />
    <Ring x={60} y={445} outer={33} inner={19} parts={[32, 3, 3, 2, 2, 2, 2, 2, 2, 2, 48]} colors={GREENS} />
    <Legend
      x={121} y={358} tx={139} vx={270} colors={GREENS}
      rows={[['New York City, NY', '52,29k'], ['Las Vegas, NV', '6,09k'], ['Los Angeles, CA', '6,02k'], ['San Francisco, CA', '3,89k'], ['Chicago, IL', '3,89k'], ['Washington, DC', '3,38k'], ['Houston, TX', '3,05k'], ['Baltimore, MD', '2,93k'], ['Detroit, MI', '2,93k'], ['Boston, MA', '2,80k'], ['Other', '82,42k']]}
    />

    <Panel x={290} y={328} w={466} h={193} />
    <Ticks x={355} y={350} step={46.6} labels={['15 000 000', '10 000 000', '5 000 000', '0']} />
    {sales.map(([a, b, c], i) => (
      <g key={i}>
        <rect x={370 + i * 41} y={a} width="34" height={490 - a} fill="#2e3148" />
        <rect x={370 + i * 41} y={b} width="34" height={490 - b} fill="#316a78" />
        <rect x={370 + i * 41} y={c} width="34" height={490 - c} fill="#b3e583" />
      </g>
    ))}
    <XLabels y={507} items={[[374, 'Jul'], [460, 'Sep'], [542, 'Nov']]} />
    <Legend x={649} y={393} tx={667} rows={[['Concerts > Pop'], ['Shows > Musicals'], ['Shows > Opera'], ['Shows > Plays']]} colors={['#a9e07e', '#b9ee86', '#316a78', '#2e3148']} />

    <Panel x={290} y={529} w={466} h={274} title="Sales cohorts" />
    <rect x="290" y="561" width="466" height="27" fill="#f3f4f8" />
    {cohortMid.map((x, i) => (
      <Label key={x} x={x} y={578} a="middle">{i + 1}</Label>
    ))}
    {cohorts.map(([date, values, fills], r) => (
      <g key={date}>
        <path d={`M290 ${588 + r * 27.7}h466`} stroke="#eeeff4" />
        <Label x={335} y={606 + r * 27.7} a="middle" c={GREY}>{date}</Label>
        {values.map((v, i) => (
          <g key={i}>
            <rect x={cohortX[i]} y={588 + r * 27.7} width={cohortX[i + 1] - cohortX[i]} height="27" fill={fills[i]} />
            <Label x={cohortMid[i]} y={606 + r * 27.7} a="middle">{v}</Label>
          </g>
        ))}
      </g>
    ))}
    <path d="M290 754h466M290 782h466" stroke="#eeeff4" />
    <Label x={335} y={772} a="middle" c={GREY}>Total</Label>
    {['24.854.112 €', '8.826.535 €', '8.198.152 €', '7.086.119 €', '4.779.918 €', '1.718.48'].map((v, i) => (
      <Label key={v} x={cohortMid[i]} y={772} a="middle" b>{v}</Label>
    ))}

    <Panel x={6} y={569} w={278} h={234} title="Top 10 Events by Ticket Sale" />
    <Ring x={62} y={702} outer={34} inner={20} parts={[1, 1, 0.8, 0.8, 0.8, 0.7, 0.7, 0.7, 0.5, 0.5, 92.5]} colors={GREENS} />
    <Legend
      x={124} y={615} tx={142} vx={270} colors={GREENS}
      rows={[['Mamma Mia!', '1,82k'], ['Spring Awakening', '1,51k'], ['The Country Girl', '1,40k'], ['Jersey Boys', '1,39k'], ['Macbeth', '1,38k'], ['Chicago', '1,25k'], ['Legally Blonde', '1,12k'], ['Spamalot', '1,10k'], ['Rhinoceros', '960'], ['Thurgood', '937'], ['Other', '156,81k']]}
    />
    <Panel x={6} y={811} w={750} h={22} />
    <Label x={239} y={830} s={11} a="end">Price Range</Label>

    <Panel x={762} y={7} w={373} h={31} title="Top 100 Events" />
    <rect x="762" y="38" width="373" height="28" fill="#f1f2f7" />
    {[[808, 'Left'], [928, 'Date'], [997, 'Time'], [1064, 'Count']].map(([x, l]) => (
      <Label key={l} x={Number(x)} y={56}>{l}</Label>
    ))}
    {events.map(([name, date, time, count], i) => {
      const y = 66 + i * 22.35;
      return (
        <g key={i}>
          <rect x="762" y={y} width="373" height="22.350" fill={i % 2 ? '#f4f5f9' : '#fff'} />
          <Label x={785} y={y + 15} a="middle" c="#c2c3cb">{i + 1}</Label>
          <Label x={812} y={y + 15}>{name}</Label>
          <Label x={959} y={y + 15} a="middle">{date}</Label>
          <Label x={1021} y={y + 15} a="middle">{time}</Label>
          <Label x={1074} y={y + 15} a="middle">{count}</Label>
        </g>
      );
    })}

    <Panel x={762} y={569} w={373} h={234} title="Listings over time" />
    <Ticks x={810} y={623} step={37} labels={['20 000', '15 000', '10 000', '5 000', '0']} />
    {[642, 640, 644, 641, 676, 737].map((y, i) => (
      <rect key={i} x={826 + i * 47} y={y} width="40" height={771 - y} fill="#5ba98a" />
    ))}
    <XLabels y={787} items={[[830, 'Jul'], [927, 'Sep'], [1021, 'Nov']]} />
    <Panel x={762} y={811} w={373} h={22} title="Listings over time (Cumulative)" />
  </svg>
);

/* ---------- Page ---------- */

const tabs = [
  { label: 'Favorites', icon: <StarIcon /> },
  { label: 'Demo Dashboards', icon: <CheckIcon /> },
  { label: 'Customer Support', icon: <DashedIcon /> },
  { label: 'Customer-Specific', icon: <DashedIcon /> },
  { label: 'Main KPIs', icon: <DashedIcon /> },
  { label: 'Marketing', icon: <DashedIcon /> },
  { label: 'Ops', icon: <DashedIcon /> },
  { label: 'Product Usage', icon: <CheckIcon /> },
  { label: 'Sales', icon: <DashedIcon /> },
  { label: 'Samples', icon: <BurstIcon />, active: true },
  { label: 'All', icon: <DotsIcon /> },
];

const dashboards = [
  { title: 'Sample Flights & Airports', text: 'Sample dashboard for US flights data and airports of the world', preview: <FlightsPreview /> },
  { title: 'Sample Flights & Airports 2', text: 'Sample dashboard for US flights data and airports of the world', preview: <Flights2Preview /> },
  { title: 'Sample Ticket Sales', text: 'Ticket sales demo dashboard', preview: <SalesPreview /> },
];

const TopBar = () => (
  <header className="flex h-[100px] items-stretch">
    <a href="#home" aria-label="Home" className="flex w-[100px] items-center justify-center bg-[#6eb5f9]">
      <LogoMark className="h-[60px] w-[60px]" />
    </a>
    <div className="flex flex-1 items-center border-b-2 border-[#e2e5ec]">
      <button aria-label="Search" className="flex h-full w-[100px] items-center justify-center bg-[#f4f6f8]">
        <SearchIcon />
      </button>
      <a href="#new-report" className="ml-9 flex items-center gap-[18px] text-[28px] leading-9 font-bold text-[#747a91]">
        <ReportIcon />
        New Report
      </a>
      <div className="ml-auto flex items-center pr-[26px]">
        <button aria-label="Notifications" className="relative">
          <BellIcon />
          <span className="absolute -right-2 -bottom-3 flex h-[26px] w-[26px] items-center justify-center rounded-full bg-[#d37671] text-lg leading-none text-white">3</span>
        </button>
        <button aria-label="Help" className="ml-[42px] flex h-9 w-9 items-center justify-center rounded-full bg-[#9aa3b5] text-[30px] leading-9 font-black text-white">?</button>
        <span className="ml-12 h-[30px] w-[2px] bg-[#ececef]" />
        <button aria-label="Settings" className="ml-[58px]"><GearIcon className="h-9 w-9" /></button>
        <button aria-label="Account" className="ml-[50px]"><AvatarIcon /></button>
      </div>
    </div>
  </header>
);

const TabBar = () => (
  <div className="border-b-2 border-[#e2e5ec] pt-[13px] pr-2 pb-[5px] pl-3">
    <div className="flex h-[94px] items-center border-[5px] border-[#ee4023] pr-[25px] pl-7">
      <nav className="mb-[2px] flex items-center gap-[6px]">
        {tabs.map((t) => (
          <a
            key={t.label}
            href={`#${t.label.toLowerCase().replace(' ', '-')}`}
            className={`flex h-[46px] items-center gap-[14px] rounded-full pr-5 pl-3 text-2xl whitespace-nowrap uppercase ${t.active ? 'bg-[#5199da] text-white' : 'text-[#9b9ca3]'}`}
          >
            {t.icon}
            {t.label}
          </a>
        ))}
      </nav>
      <div className="ml-auto flex items-center">
        <button aria-label="Grid view"><GridIcon /></button>
        <button aria-label="List view" className="ml-7"><ListIcon /></button>
        <button aria-label="Manage filters" className="ml-[58px]"><GearIcon className="h-6 w-6" /></button>
      </div>
    </div>
  </div>
);

const HeaderShapes = () => (
  <svg className="pointer-events-none absolute inset-0 h-full w-full" fill="none" strokeLinecap="round" aria-hidden="true">
    <path d="M94 143C102 98 136 80 176 80C192 80 206 83 218 88" stroke="#f4fafe" strokeWidth="24" />
    <path d="M2730 143C2738 98 2772 80 2812 80" stroke="#f4fafe" strokeWidth="24" />
    <circle cx="630" cy="142" r="18" fill="#f5faf8" />
    <circle cx="1130" cy="50" r="18" fill="#fffcf4" />
    <circle cx="1948" cy="156" r="18" fill="#fffcf4" />
    <path d="M1504 128C1536 170 1600 170 1632 130" stroke="#fbf7fb" strokeWidth="24" />
    <path d="M2134 112v40M2114 132h40" stroke="#f7fbfe" strokeWidth="16" />
    <path d="M2598 225v20" stroke="#f7fbfe" strokeWidth="16" />
  </svg>
);

const PageHeader = () => (
  <section className="relative overflow-hidden border-b-2 border-[#f0f0f3] pt-[54px] pr-[58px] pb-[88px] pl-[60px]">
    <HeaderShapes />
    <div className="relative flex items-start justify-between">
      <div className="flex items-center gap-[58px] pt-1">
        <DashboardsIcon />
        <h1 className="text-[64px] leading-[84px] font-bold text-[#3b3d50]">Dashboards</h1>
      </div>
      <button className="h-[84px] w-[288px] rounded-md bg-[#5fbf88] text-[26px] text-white">New Dashboard</button>
    </div>
  </section>
);

const DashboardCard = ({ title, text, preview }: { title: string; text: string; preview: React.ReactNode }) => (
  <article className="rounded-lg border-2 border-[#dfe1e8] bg-white shadow-[0_8px_36px_rgba(40,50,80,0.06)]">
    <div className="relative border-b-2 border-[#e2e6ed] px-8 pt-12">
      {preview}
      <span className="absolute -bottom-[22px] left-0 flex h-[46px] w-[130px] items-center justify-center rounded-r-md bg-[#9aa3b5] text-2xl text-white">SAMPLE</span>
    </div>
    <div className="px-12 pt-11 pb-7">
      <h2 className="text-4xl leading-[44px] font-bold text-[#2d3954]">{title}</h2>
      <p className="mt-4 text-[26px] leading-[38px] text-[#8190a9]">{text}</p>
    </div>
  </article>
);

const App = () => (
  <div className="min-h-screen bg-[#f5f6fa] font-['Lato',sans-serif]">
    <div className="bg-white">
      <TopBar />
      <TabBar />
      <PageHeader />
    </div>
    <main className="grid grid-cols-4 gap-[49px] pt-11 pr-[37px] pb-3 pl-10">
      {dashboards.map((d) => (
        <DashboardCard key={d.title} {...d} />
      ))}
    </main>
  </div>
);

export default App;
